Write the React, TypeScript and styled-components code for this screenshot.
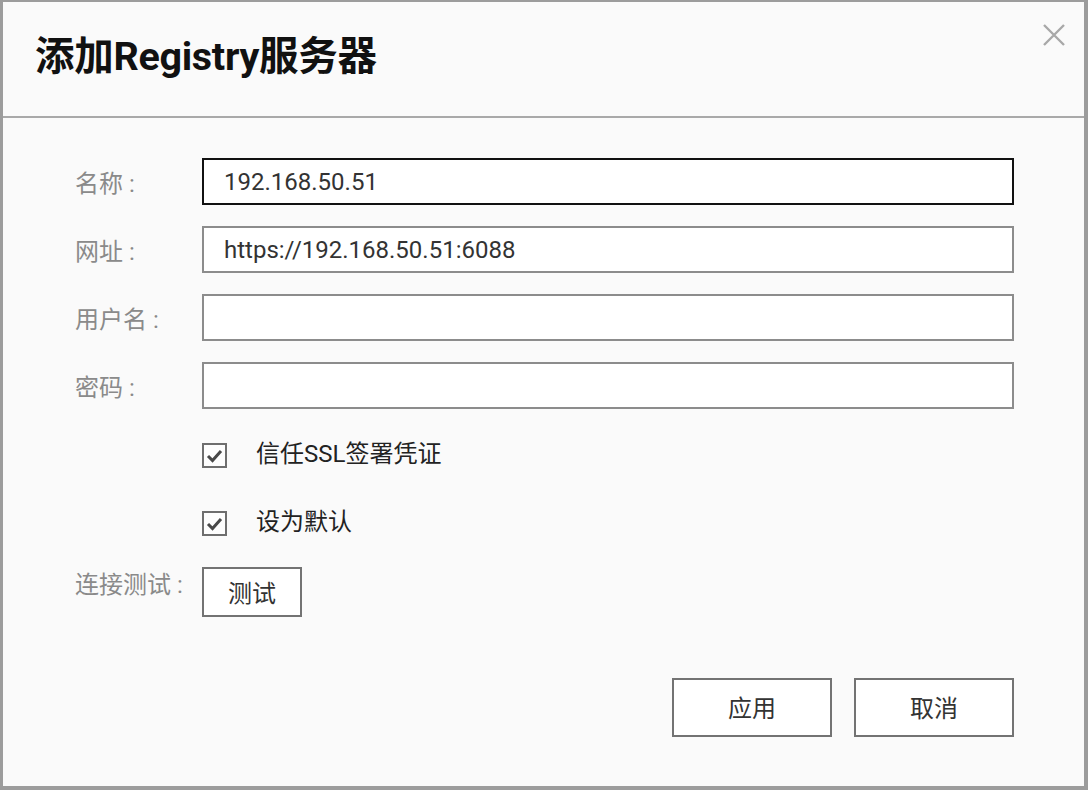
import styled, { createGlobalStyle } from "styled-components";

const Global = createGlobalStyle`
  html, body {
    margin: 0;
    padding: 0;
    background: #9c9c9c;
  }
  * { box-sizing: border-box; }
`;

const FONT = `Roboto, "Noto Sans CJK SC", "Noto Sans", sans-serif`;

const Dialog = styled.div`
  width: 1088px;
  height: 790px;
  background: #fafafa;
  border-style: solid;
  border-color: #9c9c9c;
  border-width: 2px 4px 4px 3px;
  display: flex;
  flex-direction: column;
  font-family: ${FONT};
`;

const Header = styled.div`
  height: 116px;
  border-bottom: 2px solid #a9a9a9;
  display: flex;
  align-items: center;
  justify-content: space-between;
  padding: 0 0 14px 32px;
  position: relative;
`;

const Title = styled.h1`
  margin: 0;
  font-size: 39.5px;
  font-weight: 700;
  color: #111;
  letter-spacing: -0.3px;
`;

const Close = styled.button`
  position: absolute;
  top: 20px;
  right: 17px;
  width: 26px;
  height: 26px;
  padding: 0;
  border: none;
  background: transparent;
  cursor: pointer;
  display: flex;
  align-items: center;
  justify-content: center;
`;

const Body = styled.div`
  flex: 1;
  display: flex;
  flex-direction: column;
  padding: 40px 70px 0 72px;
`;

const Row = styled.div<{ $h: number; $gap: number; $top?: boolean }>`
  display: flex;
  align-items: ${({ $top }) => ($top ? "flex-start" : "center")};
  height: ${({ $h }) => $h}px;
  margin-bottom: ${({ $gap }) => $gap}px;
`;

const Label = styled.div<{ $lh?: number }>`
  width: 127px;
  flex-shrink: 0;
  font-size: 24px;
  color: #8a8a8a;
  line-height: ${({ $lh }) => ($lh ? `${$lh}px` : "normal")};
  white-space: nowrap;
`;

const Input = styled.input<{ $focus?: boolean }>`
  flex: 1;
  height: 47px;
  border: 2px solid ${({ $focus }) => ($focus ? "#111" : "#8c8c8c")};
  background: #fff;
  padding: 0 20px;
  font-family: ${FONT};
  font-size: 24px;
  color: #333;
  outline: none;
`;

const Check = styled.span`
  width: 25px;
  height: 25px;
  border: 2px solid #6e6e6e;
  background: #fdfdfd;
  display: flex;
  align-items: center;
  justify-content: center;
  margin-right: 29px;
`;

const CheckText = styled.span`
  font-size: 24px;
  line-height: 30px;
  color: #222;
  margin-top: -4px;
`;

const Button = styled.button<{ $w: number; $h: number }>`
  width: ${({ $w }) => $w}px;
  height: ${({ $h }) => $h}px;
  border: 2px solid #737373;
  background: #fff;
  font-family: ${FONT};
  font-size: 24px;
  color: #333;
  padding: 0 0 2px;
  cursor: pointer;
`;

const Footer = styled.div`
  display: flex;
  justify-content: flex-end;
  gap: 22px;
  margin-top: 61px;
`;

function CheckMark() {
  return (
    <svg width="19" height="19" viewBox="0 0 19 19">
      <path d="M3 10 L7.5 14.5 L16 5" fill="none" stroke="#484848" strokeWidth="3" />
    </svg>
  );
}

export default function App() {
  return (
    <>
      <Global />
      <Dialog>
        <Header>
          <Title>添加Registry服务器</Title>
          <Close aria-label="close">
            <svg width="24" height="24" viewBox="0 0 24 24">
              <path d="M2 2 L22 22 M22 2 L2 22" stroke="#a8a8a8" strokeWidth="2.4" />
            </svg>
          </Close>
        </Header>
        <Body>
          <Row $h={47} $gap={21}>
            <Label>名称 :</Label>
            <Input $focus defaultValue="192.168.50.51" />
          </Row>
          <Row $h={47} $gap={21}>
            <Label>网址 :</Label>
            <Input defaultValue="https://192.168.50.51:6088" />
          </Row>
          <Row $h={47} $gap={21}>
            <Label>用户名 :</Label>
            <Input defaultValue="" />
          </Row>
          <Row $h={47} $gap={21}>
            <Label>密码 :</Label>
            <Input type="password" defaultValue="" />
          </Row>
          <Row $h={51} $gap={17}>
            <Label />
            <Check>
              <CheckMark />
            </Check>
            <CheckText>信任SSL签署凭证</CheckText>
          </Row>
          <Row $h={51} $gap={17}>
            <Label />
            <Check>
              <CheckMark />
            </Check>
            <CheckText>设为默认</CheckText>
          </Row>
          <Row $h={51} $gap={0} $top>
            <Label $lh={38}>连接测试 :</Label>
            <Button $w={100} $h={50} style={{ marginTop: 1 }}>
              测试
            </Button>
          </Row>
          <Footer>
            <Button $w={160} $h={59}>应用</Button>
            <Button $w={160} $h={59}>取消</Button>
          </Footer>
        </Body>
      </Dialog>
    </>
  );
}
